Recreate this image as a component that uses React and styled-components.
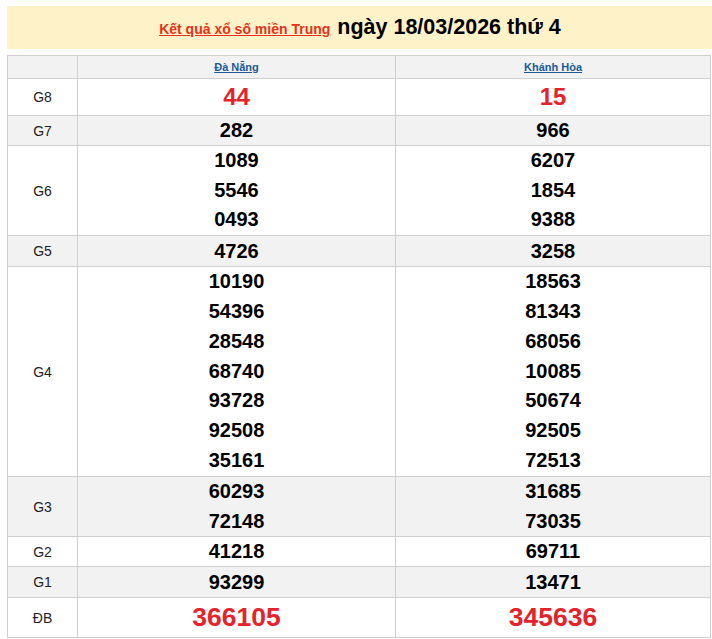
import React from "react";
import styled, { createGlobalStyle } from "styled-components";

const Global = createGlobalStyle`
  html, body { margin: 0; padding: 0; background: #fff; }
  body { font-family: Arial, "Liberation Sans", sans-serif; color: #000; }
`;

const Page = styled.div`
  width: 712px;
  height: 639px;
  overflow: hidden;
  padding: 6px 0 0 7px;
  box-sizing: border-box;
`;

const Banner = styled.div`
  width: 706px;
  height: 43px;
  background: #fef3c8;
  display: flex;
  align-items: baseline;
  justify-content: center;
  gap: 7px;
  padding-top: 9px;
  box-sizing: border-box;
  margin-bottom: 6px;
`;

const TitleLink = styled.a`
  font-size: 14px;
  font-weight: bold;
  color: #e5321c;
  text-decoration: underline;
`;

const TitleDate = styled.span`
  font-size: 21.5px;
  font-weight: bold;
  color: #000;
`;

const Table = styled.div`
  width: 704px;
  border: 1px solid #cfcfcf;
  border-bottom: none;
  box-sizing: border-box;
`;

const Row = styled.div`
  display: grid;
  grid-template-columns: 69px 318px 315px;
  border-bottom: 1px solid #cfcfcf;
  background: ${(p) => (p.$alt ? "#f2f2f2" : "#fff")};
  height: ${(p) => p.$h}px;
`;

const Cell = styled.div`
  display: flex;
  flex-direction: column;
  align-items: center;
  justify-content: center;
  border-left: ${(p) => (p.$first ? "none" : "1px solid #cfcfcf")};
`;

const Label = styled.span`
  font-size: 14px;
  color: #222;
`;

const HeadLink = styled.a`
  font-size: 11px;
  font-weight: bold;
  color: #1b5a97;
  text-decoration: underline;
`;

const Num = styled.span`
  font-weight: bold;
  font-size: ${(p) => p.$size || 20}px;
  color: ${(p) => (p.$red ? "#e5232b" : "#000")};
`;

const rows = [
  { label: "G8", a: ["44"], b: ["15"], red: true, size: 24, h: 36 },
  { label: "G7", a: ["282"], b: ["966"], alt: true, h: 29 },
  { label: "G6", a: ["1089", "5546", "0493"], b: ["6207", "1854", "9388"], h: 89 },
  { label: "G5", a: ["4726"], b: ["3258"], alt: true, h: 30 },
  {
    label: "G4",
    a: ["10190", "54396", "28548", "68740", "93728", "92508", "35161"],
    b: ["18563", "81343", "68056", "10085", "50674", "92505", "72513"],
    h: 209,
  },
  { label: "G3", a: ["60293", "72148"], b: ["31685", "73035"], alt: true, h: 59 },
  { label: "G2", a: ["41218"], b: ["69711"], h: 29 },
  { label: "G1", a: ["93299"], b: ["13471"], alt: true, h: 30 },
  { label: "ĐB", a: ["366105"], b: ["345636"], red: true, size: 26.5, h: 39 },
];

function Nums({ list, row }) {
  const lh = row.h / list.length;
  return list.map((n, i) => (
    <Num key={i} $red={row.red} $size={row.size} style={{ lineHeight: `${lh}px` }}>
      {n}
    </Num>
  ));
}

export default function App() {
  return (
    <>
      <Global />
      <Page>
        <Banner>
          <TitleLink href="#">Kết quả xổ số miền Trung</TitleLink>
          <TitleDate>ngày 18/03/2026 thứ 4</TitleDate>
        </Banner>
        <Table>
          <Row $alt $h={22}>
            <Cell $first />
            <Cell>
              <HeadLink href="#">Đà Nẵng</HeadLink>
            </Cell>
            <Cell>
              <HeadLink href="#">Khánh Hòa</HeadLink>
            </Cell>
          </Row>
          {rows.map((r) => (
            <Row key={r.label} $alt={r.alt} $h={r.h}>
              <Cell $first>
                <Label>{r.label}</Label>
              </Cell>
              <Cell>
                <Nums list={r.a} row={r} />
              </Cell>
              <Cell>
                <Nums list={r.b} row={r} />
              </Cell>
            </Row>
          ))}
        </Table>
      </Page>
    </>
  );
}
